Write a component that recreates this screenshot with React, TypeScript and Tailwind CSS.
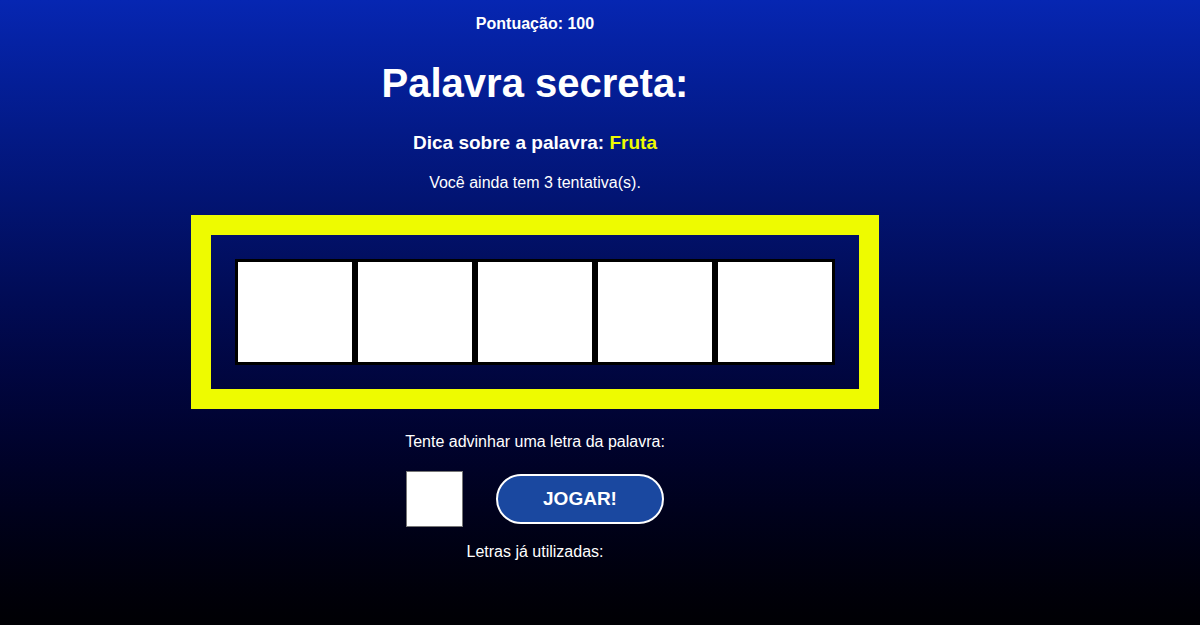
const LETTERS = ["", "", "", "", ""];

export default function App() {
  return (
    <div className="min-h-[625px] w-full bg-linear-to-b from-[#0626b2] to-[#000004] font-['Liberation_Sans',Arial,sans-serif] text-white">
      <div className="w-[1070px] flex flex-col items-center text-center">
        <p className="mt-[14px] text-[16px] font-bold leading-[20px]">Pontuação: 100</p>

        <h1 className="mt-[26px] text-[40px] font-bold leading-[46px]">Palavra secreta:</h1>

        <h3 className="mt-[26px] text-[19px] font-bold leading-[22px]">
          Dica sobre a palavra: <span className="text-[#eefb00]">Fruta</span>
        </h3>

        <p className="mt-[19px] text-[16px] leading-[20px]">Você ainda tem 3 tentativa(s).</p>

        {/* caixa das letras */}
        <div className="mt-[22px] border-[20px] border-[#eefb00] p-[24px]">
          <div className="flex">
            {LETTERS.map((l, i) => (
              <div
                key={i}
                className="w-[120px] h-[106px] border-[3px] border-black bg-white flex items-center justify-center text-black text-[40px] font-bold"
              >
                {l}
              </div>
            ))}
          </div>
        </div>

        <p className="mt-[23px] text-[16px] leading-[20px]">Tente advinhar uma letra da palavra:</p>

        <form className="mt-[19px] flex items-center gap-[33px]" onSubmit={(e) => e.preventDefault()}>
          <input
            type="text"
            maxLength={1}
            className="w-[57px] h-[56px] bg-white border border-[#767676] text-black text-center text-[20px] outline-none"
          />
          <button
            type="submit"
            className="w-[168px] h-[50px] rounded-full border-2 border-white bg-[#1a48a0] text-[19px] font-bold text-white"
          >
            JOGAR!
          </button>
        </form>

        <p className="mt-[15px] text-[16px] leading-[20px]">Letras já utilizadas:</p>
      </div>
    </div>
  );
}
